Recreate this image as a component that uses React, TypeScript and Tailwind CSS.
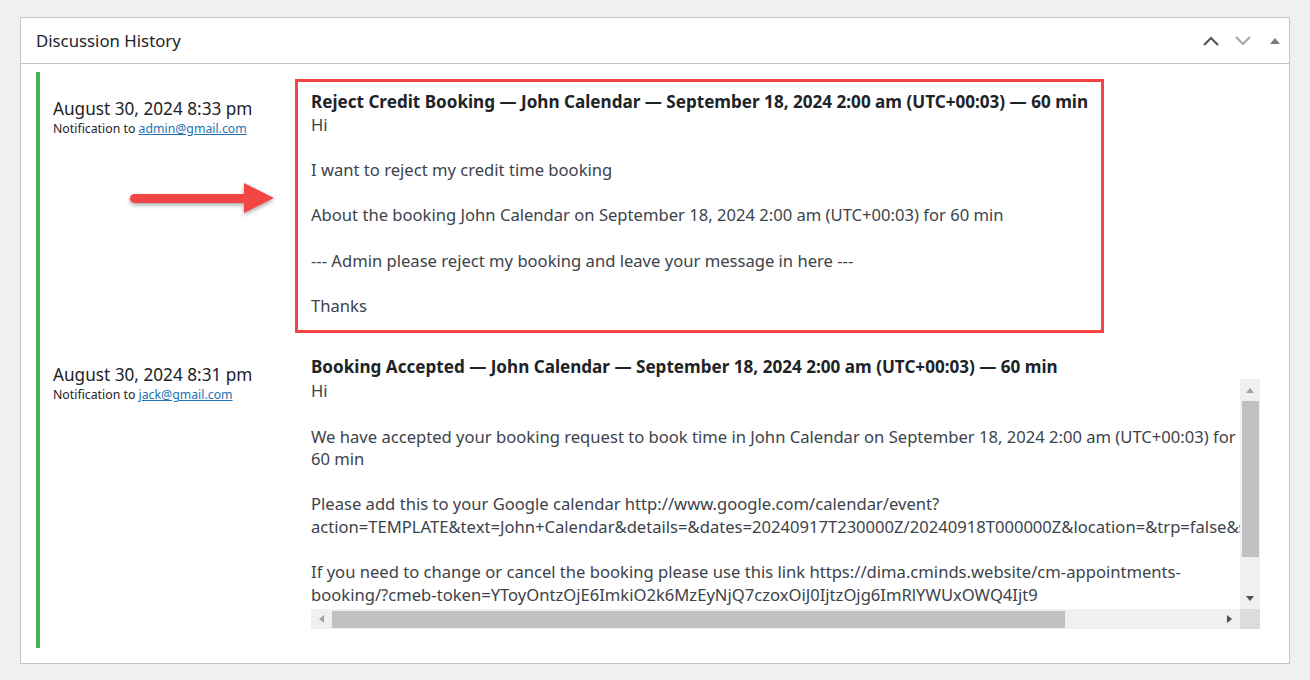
import { ReactNode } from "react";

function HeaderIcons() {
  return (
    <div className="flex items-center gap-[12px] pr-[4px]">
      <button className="w-[20px] h-[20px] flex items-center justify-center">
        <svg width="18" height="12" viewBox="0 0 18 12">
          <polyline points="2,10 9,3 16,10" fill="none" stroke="#50575e" strokeWidth="2.2" />
        </svg>
      </button>
      <button className="w-[20px] h-[20px] flex items-center justify-center">
        <svg width="18" height="12" viewBox="0 0 18 12">
          <polyline points="2,2 9,9 16,2" fill="none" stroke="#a7aaad" strokeWidth="2.2" />
        </svg>
      </button>
      <button className="w-[20px] h-[20px] flex items-center justify-center">
        <svg width="12" height="10" viewBox="0 0 12 10">
          <polygon points="1,8 6,2 11,8" fill="#787c82" />
        </svg>
      </button>
    </div>
  );
}

function EntryMeta({ date, email }: { date: string; email: string }) {
  return (
    <div className="w-[255px] shrink-0 pl-[13px] pt-[19px]">
      <div className="text-[17.2px] leading-[22px] text-[#1d2327]">{date}</div>
      <div className="text-[12.3px] leading-[18px] text-[#1d2327]">
        Notification to{" "}
        <a href="#" className="text-[#2271b1] underline">
          {email}
        </a>
      </div>
    </div>
  );
}

function Para({ children }: { children: ReactNode }) {
  return <p className="mb-[22.6px] last:mb-0">{children}</p>;
}

function Tri({ dir, color }: { dir: "up" | "down" | "left" | "right"; color: string }) {
  const pts = {
    up: "0,5 4,0 8,5",
    down: "0,0 4,5 8,0",
    left: "5,0 0,4 5,8",
    right: "0,0 5,4 0,8",
  }[dir];
  const vertical = dir === "up" || dir === "down";
  return (
    <svg width={vertical ? 8 : 5} height={vertical ? 5 : 8} viewBox={vertical ? "0 0 8 5" : "0 0 5 8"}>
      <polygon points={pts} fill={color} />
    </svg>
  );
}

function ScrollBox({ children }: { children: ReactNode }) {
  return (
    <div className="grid grid-cols-[929px_20px] grid-rows-[230px_20px] w-[949px]">
      <div className="overflow-hidden pt-[1px]">{children}</div>
      <div className="bg-[#f0f0f0] flex flex-col items-center">
        <div className="h-[22px] flex items-center justify-center">
          <Tri dir="up" color="#a3a3a3" />
        </div>
        <div className="h-[156px] w-[17px] bg-[#c1c1c1]" />
        <div className="flex-1" />
        <div className="h-[22px] flex items-center justify-center">
          <Tri dir="down" color="#505050" />
        </div>
      </div>
      <div className="bg-[#f0f0f0] flex items-center">
        <div className="w-[21px] flex items-center justify-center">
          <Tri dir="left" color="#a3a3a3" />
        </div>
        <div className="w-[733px] h-[17px] bg-[#c1c1c1]" />
        <div className="flex-1" />
        <div className="w-[21px] flex items-center justify-center">
          <Tri dir="right" color="#505050" />
        </div>
      </div>
      <div className="bg-[#dcdcdc]" />
    </div>
  );
}

export default function App() {
  return (
    <div className="min-h-screen bg-[#f0f0f0] px-[20px] pt-[17px] font-['Noto_Sans',sans-serif]">
      <div className="relative border border-[#c3c4c7] bg-white">
        <div className="flex items-center justify-between h-[46px] border-b border-[#c3c4c7] pl-[15px]">
          <h2 className="text-[16.8px] text-[#1d2327]">Discussion History</h2>
          <HeaderIcons />
        </div>

        <div className="px-[15px] pt-[8px] pb-[15px]">
          <div className="border-l-4 border-[#46b450] flex flex-col gap-[12px] pt-[7px] pb-[19px]">
            <div className="flex">
              <EntryMeta date="August 30, 2024 8:33 pm" email="admin@gmail.com" />
              <div className="w-fit border-[3px] border-[#f44444] px-[13px] pt-[7px] pb-[13px] text-[16.6px] leading-[22.6px] text-[#3c434a]">
                <h3 className="font-bold text-[17.1px] text-[#1d2327] leading-[25px]">
                  Reject Credit Booking — John Calendar — September 18, 2024 2:00 am (UTC+00:03) — 60 min
                </h3>
                <Para>Hi</Para>
                <Para>I want to reject my credit time booking</Para>
                <Para>About the booking John Calendar on September 18, 2024 2:00 am (UTC+00:03) for 60 min</Para>
                <Para>--- Admin please reject my booking and leave your message in here ---</Para>
                <Para>Thanks</Para>
              </div>
            </div>

            <div className="flex">
              <EntryMeta date="August 30, 2024 8:31 pm" email="jack@gmail.com" />
              <div className="flex-1 min-w-0 pl-[16px] pt-[9px] text-[16.6px] leading-[22.6px] text-[#3c434a]">
                <h3 className="font-bold text-[17.1px] text-[#1d2327] leading-[25px]">
                  Booking Accepted — John Calendar — September 18, 2024 2:00 am (UTC+00:03) — 60 min
                </h3>
                <ScrollBox>
                  <Para>Hi</Para>
                  <Para>
                    We have accepted your booking request to book time in John Calendar on September 18, 2024 2:00 am (UTC+00:03) for 60 min
                  </Para>
                  <Para>
                    Please add this to your Google calendar http://www.google.com/calendar/event?action=TEMPLATE&amp;text=John+Calendar&amp;details=&amp;dates=20240917T230000Z/20240918T000000Z&amp;location=&amp;trp=false&amp;sprop=&amp;sprop=name:
                  </Para>
                  <Para>
                    If you need to change or cancel the booking please use this link https://dima.cminds.website/cm-appointments-booking/?cmeb-token=YToyOntzOjE6ImkiO2k6MzEyNjQ7czoxOiJ0IjtzOjg6ImRlYWUxOWQ4Ijt9
                  </Para>
                  <Para>Thanks</Para>
                </ScrollBox>
              </div>
            </div>
          </div>
        </div>

        {/* annotation arrow */}
        <svg className="absolute left-[104px] top-[160px]" width="156" height="46" viewBox="0 0 156 46">
          <defs>
            <filter id="arrowShadow" x="-10%" y="-30%" width="120%" height="170%">
              <feDropShadow dx="0" dy="2" stdDeviation="2" floodColor="#000" floodOpacity="0.35" />
            </filter>
          </defs>
          <g filter="url(#arrowShadow)">
            <rect x="5" y="16" width="118" height="9" rx="4.5" fill="#f44444" />
            <polygon points="119,5 149,20 119,35" fill="#f44444" />
          </g>
        </svg>
      </div>
    </div>
  );
}
